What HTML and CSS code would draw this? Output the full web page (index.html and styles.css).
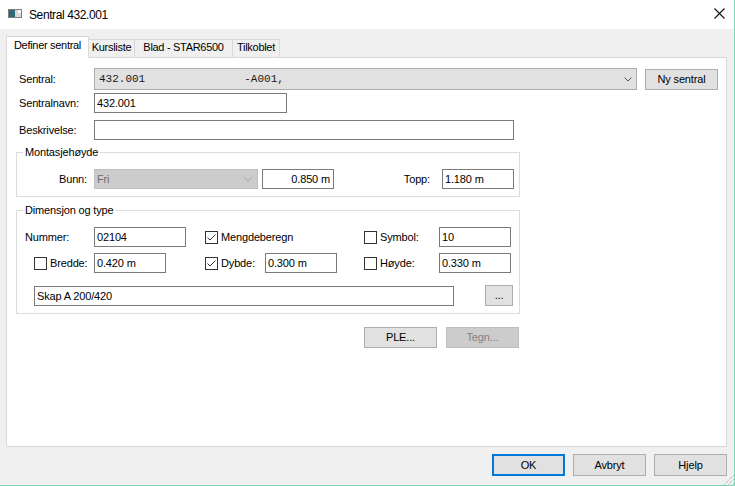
FILE: index.html
```html
<!DOCTYPE html>
<html lang="no">
<head>
<meta charset="utf-8">
<title>Sentral 432.001</title>
<link rel="stylesheet" href="styles.css">
</head>
<body>
<div class="window">
  <div class="titlebar">
    <svg class="app-icon" width="14" height="9" viewBox="0 0 14 9">
      <rect x="0.5" y="0.5" width="13" height="8" fill="#e6e6e6" stroke="#7d7d7d"/>
      <rect x="1" y="1" width="6" height="7" fill="#2c6a74"/>
      <rect x="7" y="1" width="6" height="7" fill="#d9d9d9"/>
      <rect x="10" y="1" width="3" height="3" fill="#ffffff"/>
    </svg>
    <span class="title">Sentral 432.001</span>
    <svg class="close" width="11" height="11" viewBox="0 0 11 11">
      <path d="M0.5 0.5 L10.5 10.5 M10.5 0.5 L0.5 10.5" stroke="#111" stroke-width="1.1" fill="none"/>
    </svg>
  </div>

  <div class="tabs">
    <div class="tab active t1">Definer sentral</div>
    <div class="tab t2">Kursliste</div>
    <div class="tab t3">Blad - STAR6500</div>
    <div class="tab t4">Tilkoblet</div>
  </div>

  <div class="panel">
    <div class="row top-row">
      <span class="lbl">Sentral:</span>
      <div class="combo"><span class="mono">432.001               -A001,</span>
        <svg class="chev" width="8" height="5" viewBox="0 0 8 5"><path d="M0.5 0.5 L4 4 L7.5 0.5" stroke="#555" fill="none"/></svg>
      </div>
      <div class="btn btn-new">Ny sentral</div>
    </div>
    <div class="row top-row r2">
      <span class="lbl">Sentralnavn:</span>
      <div class="field f-name">432.001</div>
    </div>
    <div class="row top-row r3">
      <span class="lbl">Beskrivelse:</span>
      <div class="field f-desc"></div>
    </div>

    <div class="group g1">
      <div class="legend">Montasjehøyde</div>
      <div class="row g1-row">
        <span class="lbl-bunn">Bunn:</span>
        <div class="select-dis">Fri
          <svg class="chev" width="8" height="5" viewBox="0 0 8 5"><path d="M0.5 0.5 L4 4 L7.5 0.5" stroke="#a6a6a6" fill="none"/></svg>
        </div>
        <div class="field f-72 right">0.850 m</div>
        <span class="lbl-topp">Topp:</span>
        <div class="field f-72">1.180 m</div>
      </div>
    </div>

    <div class="group g2">
      <div class="legend">Dimensjon og type</div>
      <div class="row g2-r1">
        <span class="lbl-num">Nummer:</span>
        <div class="field f-92">02104</div>
        <div class="chk chk-meng"><span class="box"><svg width="11" height="11" viewBox="0 0 11 11"><path d="M1.5 5.5 L4 8 L9.5 2.5" stroke="#333" stroke-width="1" fill="none"/></svg></span>Mengdeberegn</div>
        <div class="chk chk-75">
          <span class="box"></span>Symbol:</div>
        <div class="field f-72">10</div>
      </div>
      <div class="row g2-r2">
        <div class="chk chk-60"><span class="box"></span>Bredde:</div>
        <div class="field f-72">0.420 m</div>
        <div class="chk chk-60 chk-dybde"><span class="box"><svg width="11" height="11" viewBox="0 0 11 11"><path d="M1.5 5.5 L4 8 L9.5 2.5" stroke="#333" stroke-width="1" fill="none"/></svg></span>Dybde:</div>
        <div class="field f-72">0.300 m</div>
        <div class="chk chk-75 chk-hoyde"><span class="box"></span>Høyde:</div>
        <div class="field f-72">0.330 m</div>
      </div>
      <div class="row g2-r3">
        <div class="field f-skap">Skap A 200/420</div>
        <div class="btn btn-dots">...</div>
      </div>
    </div>

    <div class="row action-row">
      <div class="btn">PLE...</div>
      <div class="btn disabled">Tegn...</div>
    </div>
  </div>

  <div class="footer">
    <div class="btn btn-foot default">OK</div>
    <div class="btn btn-foot">Avbryt</div>
    <div class="btn btn-foot">Hjelp</div>
  </div>

  <svg class="grip" width="12" height="12" viewBox="0 0 12 12">
    <path d="M11.5 2.5 L2.5 11.5 M11.5 6.5 L6.5 11.5 M11.5 10.5 L10.5 11.5" stroke="#a0a0a0" stroke-width="1" stroke-dasharray="1 1" fill="none"/>
  </svg>
</div>
</body>
</html>
```

FILE: styles.css
```css
html, body {
  margin: 0;
  padding: 0;
  background: #f0f0f0;
}

.window {
  position: relative;
  width: 735px;
  height: 486px;
  box-sizing: border-box;
  border-right: 1px solid #7fd6b6;
  border-bottom: 1px solid #7fd6b6;
  background: #f0f0f0;
  display: flex;
  flex-direction: column;
  font-family: "Liberation Sans", Arial, sans-serif;
  font-size: 11px;
  line-height: 13px;
  letter-spacing: -0.15px;
  color: #000;
}

/* title bar */
.titlebar {
  height: 29px;
  flex-shrink: 0;
  background: #fff;
  display: flex;
  align-items: flex-start;
}
.app-icon {
  margin: 9px 0 0 8px;
}
.title {
  margin: 8px 0 0 7px;
  font-size: 12px;
  line-height: 14px;
  letter-spacing: -0.4px;
}
.close {
  margin: 8px 9px 0 auto;
}

/* tabs */
.tabs {
  height: 28px;
  flex-shrink: 0;
  display: flex;
  align-items: flex-end;
  padding-left: 6px;
}
.tab {
  box-sizing: border-box;
  height: 18px;
  border: 1px solid #d9d9d9;
  border-bottom: 0;
  background: #f0f0f0;
  text-align: center;
  padding-top: 1px;
  white-space: nowrap;
  letter-spacing: -0.3px;
}
.tab.active {
  height: 22px;
  margin-bottom: -1px;
  background: #fff;
  padding-top: 2px;
  position: relative;
  z-index: 1;
}
.t1 { width: 83px; }
.t2 { width: 47px; margin-left: -1px; }
.t3 { width: 99px; margin-left: -1px; }
.t4 { width: 48px; margin-left: -1px; }

/* panel */
.panel {
  margin-left: 6px;
  width: 721px;
  height: 390px;
  flex-shrink: 0;
  box-sizing: border-box;
  border: 1px solid #d9d9d9;
  background: #fff;
  padding: 10px 0 0 9px;
}

.row {
  display: flex;
  align-items: center;
}
.top-row { padding-left: 3px; }
.r2 { margin-top: 3px; }
.r3 { margin-top: 7px; }
.lbl { width: 75px; }

.combo {
  width: 543px;
  height: 22px;
  box-sizing: border-box;
  border: 1px solid #adadad;
  background: #e1e1e1;
  display: flex;
  align-items: center;
  padding: 0 4px;
}
.mono {
  font-family: "Liberation Mono", "Courier New", monospace;
  font-size: 11px;
  letter-spacing: 0;
  white-space: pre;
  color: #1a1a1a;
}
.chev { margin-left: auto; }

.btn {
  box-sizing: border-box;
  width: 73px;
  height: 21px;
  border: 1px solid #adadad;
  background: #e1e1e1;
  display: flex;
  align-items: center;
  justify-content: center;
  white-space: nowrap;
}
.btn.disabled {
  background: #cccccc;
  border-color: #bfbfbf;
  color: #838383;
}
.btn-new { margin-left: 8px; }

.field {
  box-sizing: border-box;
  height: 20px;
  border: 1px solid #7a7a7a;
  background: #fff;
  padding: 0 2px;
  display: flex;
  align-items: center;
  white-space: pre;
}
.field.right {
  justify-content: flex-end;
  padding-right: 3px;
}
.f-name { width: 193px; }
.f-desc { width: 420px; }
.f-72 { width: 72px; }
.f-92 { width: 92px; }
.f-skap { width: 420px; margin-top: 1px; }

/* groups */
.group {
  width: 504px;
  box-sizing: border-box;
  border: 1px solid #dcdcdc;
  padding-bottom: 7px;
}
.g1 { margin-top: 12px; }
.g2 { margin-top: 13px; }
.legend {
  display: table;
  background: #fff;
  margin: -7px 0 0 6px;
  padding: 0 2px;
  line-height: 13px;
}

.g1-row { margin-top: 10px; }
.lbl-bunn { width: 70px; text-align: right; }
.select-dis {
  box-sizing: border-box;
  width: 164px;
  height: 20px;
  margin: 0 4px 0 7px;
  border: 1px solid #bfbfbf;
  background: #cccccc;
  color: #6d6d6d;
  display: flex;
  align-items: center;
  padding: 0 5px 0 2px;
}
.lbl-topp {
  box-sizing: border-box;
  width: 108px;
  text-align: right;
  padding-right: 12px;
}

.g2-r1 { margin-top: 10px; padding-left: 8px; }
.lbl-num { width: 69px; }
.chk {
  display: flex;
  align-items: center;
  white-space: nowrap;
}
.box {
  box-sizing: border-box;
  width: 13px;
  height: 13px;
  border: 1px solid #333;
  background: #fff;
  margin-right: 3px;
  display: flex;
  align-items: center;
  justify-content: center;
}
.chk-meng { width: 159px; margin-left: 19px; }
.chk-75 { width: 75px; }
.chk-60 { width: 60px; }
.g2-r2 { margin-top: 6px; padding-left: 17px; }
.chk-dybde { margin-left: 39px; }
.chk-hoyde { margin-left: 27px; }
.g2-r3 {
  margin-top: 12px;
  padding-left: 17px;
  align-items: flex-start;
}
.btn-dots {
  width: 28px;
  margin-left: 31px;
  align-items: flex-end;
  padding-bottom: 3px;
}

.action-row {
  margin-top: 13px;
  padding-left: 348px;
  gap: 9px;
}

/* footer */
.footer {
  display: flex;
  justify-content: flex-end;
  gap: 8px;
  padding: 7px 7px 0 0;
}
.btn-foot { height: 22px; }
.btn-foot.default {
  border: 2px solid #0078d7;
}

.grip {
  position: absolute;
  right: 0;
  bottom: 0;
}
```
